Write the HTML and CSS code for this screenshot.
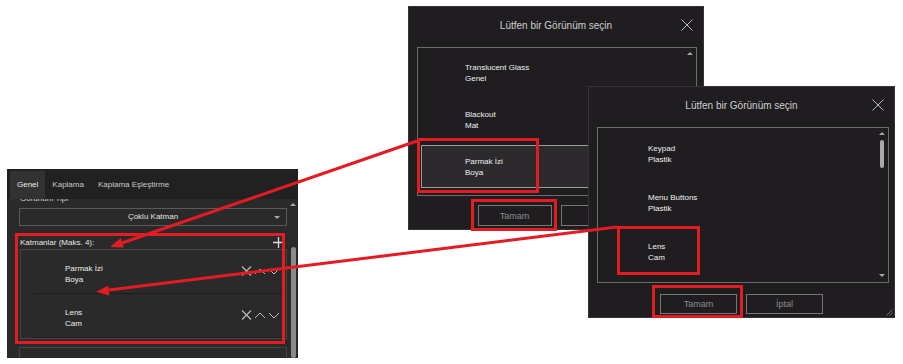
FILE: index.html
```html
<!DOCTYPE html>
<html>
    <head>
        <meta charset="utf-8">
        <title>Görünüm seçimi</title>
        <link rel="stylesheet" href="styles.css">
    </head>
    <body>
    <div class="stage">

        <!-- sol taraftaki özellik paneli -->
        <div class="panel">
            <div class="tabs">
                <span class="tab active">Genel</span>
                <span class="tab">Kaplama</span>
                <span class="tab">Kaplama Eşleştirme</span>
            </div>
            <div class="panel-body">
                <div class="panel-main">
                    <div class="field-label">Görünüm Tipi</div>
                    <div class="select">Çoklu Katman<span class="select-arrow"></span></div>
                    <div class="layers-head">
                        <span>Katmanlar (Maks. 4):</span>
                        <svg width="11" height="11" viewBox="0 0 11 11"><path d="M5.5 0V11M0 5.5H11" stroke="#dcdcdc" stroke-width="1.3"/></svg>
                    </div>
                    <div class="layers">
                        <div class="layer">
                            <div class="layer-name">Parmak İzi<br>Boya</div>
                            <div class="layer-tools">
                                <svg width="11" height="10" viewBox="0 0 11 10"><path d="M1 0.5L10 9.5M10 0.5L1 9.5" stroke="#bdbdbd" stroke-width="1.1"/></svg>
                                <svg width="12" height="8" viewBox="0 0 12 8"><path d="M1 7L6 2L11 7" stroke="#bdbdbd" stroke-width="1" fill="none"/></svg>
                                <svg width="12" height="8" viewBox="0 0 12 8"><path d="M1 2L6 7L11 2" stroke="#bdbdbd" stroke-width="1" fill="none"/></svg>
                            </div>
                        </div>
                        <div class="layer">
                            <div class="layer-name">Lens<br>Cam</div>
                            <div class="layer-tools">
                                <svg width="11" height="10" viewBox="0 0 11 10"><path d="M1 0.5L10 9.5M10 0.5L1 9.5" stroke="#bdbdbd" stroke-width="1.1"/></svg>
                                <svg width="12" height="8" viewBox="0 0 12 8"><path d="M1 7L6 2L11 7" stroke="#bdbdbd" stroke-width="1" fill="none"/></svg>
                                <svg width="12" height="8" viewBox="0 0 12 8"><path d="M1 2L6 7L11 2" stroke="#bdbdbd" stroke-width="1" fill="none"/></svg>
                            </div>
                        </div>
                    </div>
                    <div class="next-box"></div>
                </div>
                <div class="panel-scroll">
                    <span class="tri-up"></span>
                    <span class="panel-thumb"></span>
                </div>
            </div>
        </div>

        <!-- ilk pencere -->
        <div class="dialog d1">
            <div class="dialog-head">
                <span></span>
                <span class="dialog-title">Lütfen bir Görünüm seçin</span>
                <svg class="close" width="12" height="12" viewBox="0 0 12 12"><path d="M0.5 0.5L11.5 11.5M11.5 0.5L0.5 11.5" stroke="#bbb" stroke-width="1"/></svg>
            </div>
            <div class="list">
                <div class="list-items">
                    <div class="item"><span>Translucent Glass</span><span>Genel</span></div>
                    <div class="item"><span>Blackout</span><span>Mat</span></div>
                    <div class="item selected"><span>Parmak İzi</span><span>Boya</span></div>
                </div>
                <div class="list-scroll">
                    <span class="tri-up"></span>
                </div>
            </div>
            <div class="dialog-foot">
                <span class="btn">Tamam</span>
                <span class="btn">İptal</span>
            </div>
        </div>

        <!-- ikinci pencere -->
        <div class="dialog d2">
            <div class="dialog-head">
                <span></span>
                <span class="dialog-title">Lütfen bir Görünüm seçin</span>
                <svg class="close" width="12" height="12" viewBox="0 0 12 12"><path d="M0.5 0.5L11.5 11.5M11.5 0.5L0.5 11.5" stroke="#bbb" stroke-width="1"/></svg>
            </div>
            <div class="list">
                <div class="list-items">
                    <div class="item"><span>Keypad</span><span>Plastik</span></div>
                    <div class="item"><span>Menu Buttons</span><span>Plastik</span></div>
                    <div class="item"><span>Lens</span><span>Cam</span></div>
                </div>
                <div class="list-scroll">
                    <span class="tri-up"></span>
                    <span class="thumb"></span>
                    <span class="tri-down"></span>
                </div>
            </div>
            <div class="dialog-foot">
                <span class="btn">Tamam</span>
                <span class="btn">İptal</span>
            </div>
            <svg class="grip" width="8" height="8" viewBox="0 0 8 8"><path d="M7.5 1.5L1.5 7.5M7.5 4.5L4.5 7.5" stroke="#888" stroke-width="0.8"/></svg>
        </div>

        <!-- kırmızı işaretler -->
        <svg class="marks" width="903" height="364" viewBox="0 0 903 364">
            <g fill="none" stroke="#e31b23" stroke-width="3">
                <rect x="16.5" y="234.5" width="267" height="108"/>
                <rect x="418.5" y="139.5" width="119" height="52"/>
                <rect x="472.5" y="200.5" width="83" height="29"/>
                <rect x="618.5" y="227.5" width="80" height="46"/>
                <rect x="653.5" y="286.5" width="88" height="30"/>
                <line x1="417" y1="141" x2="122" y2="243"/>
                <line x1="617" y1="227" x2="109" y2="290"/>
            </g>
            <g fill="#e31b23">
                <polygon points="110,247 123.9,247.5 120.7,238.1"/>
                <polygon points="96,292 109.5,295.4 108.3,285.4"/>
            </g>
        </svg>
    </div>
    </body>
</html>
```

FILE: styles.css
```css
body{
    margin: 0;
    background-color: #fff;
    font-family: "Liberation Sans", Arial, sans-serif;
}

.stage{
    position: relative;
    width: 903px;
    height: 364px;
    overflow: hidden;
}

/* panel */
.panel{
    position: absolute;
    left: 7px;
    top: 169px;
    width: 291px;
    height: 189px;
    background-color: #2a2a2a;
    display: flex;
    flex-direction: column;
    overflow: hidden;
}

.tabs{
    height: 30px;
    flex: none;
    background-color: #212121;
    display: flex;
    align-items: flex-end;
    padding-left: 3px;
}

.tab{
    height: 28px;
    line-height: 28px;
    padding: 0 7px;
    font-size: 8px;
    color: #c9c9c9;
}

.tab.active{
    background-color: #323232;
    color: #ececec;
}

.panel-body{
    flex: 1;
    display: flex;
    overflow: hidden;
}

.panel-main{
    flex: 1;
    padding: 0 1px 0 12px;
}

.field-label{
    font-size: 8px;
    line-height: 11px;
    margin-top: -6px;
    padding-left: 1px;
    color: #d6d6d6;
}

.select{
    position: relative;
    margin-top: 4px;
    height: 18px;
    box-sizing: border-box;
    border: 1px solid #5a5a5a;
    font-size: 8px;
    line-height: 16px;
    text-align: center;
    color: #e0e0e0;
}

.select-arrow{
    position: absolute;
    right: 6px;
    top: 7px;
    border-left: 3px solid transparent;
    border-right: 3px solid transparent;
    border-top: 3px solid #a8a8a8;
}

.layers-head{
    margin-top: 10px;
    height: 13px;
    display: flex;
    justify-content: space-between;
    align-items: center;
    padding: 0 3px 0 1px;
    font-size: 8px;
    color: #e6e6e6;
}

.layers{
    margin-left: 1px;
    width: 265px;
    border: 1px solid #444;
}

.layer{
    height: 44px;
    box-sizing: border-box;
    margin-left: 12px;
    padding-top: 4px;
    border-bottom: 1px solid #1e1e1e;
    display: flex;
    align-items: center;
}

.layer-name{
    flex: 1;
    padding-left: 32px;
    font-size: 8px;
    line-height: 11px;
    color: #eee;
}

.layer-tools{
    display: flex;
    align-items: center;
    gap: 2px;
    margin-right: 6px;
    margin-bottom: 6px;
}

.next-box{
    margin-top: 8px;
    height: 30px;
    border: 1px solid #444;
    border-bottom: none;
}

.panel-scroll{
    width: 10px;
    display: flex;
    flex-direction: column;
    align-items: center;
}

.panel-scroll .tri-up{
    margin-top: 4px;
}

.panel-thumb{
    margin-top: 41px;
    width: 5px;
    height: 130px;
    border-radius: 3px;
    background-color: #8a8a8a;
}

.tri-up{
    border-left: 3px solid transparent;
    border-right: 3px solid transparent;
    border-bottom: 3px solid #a8a8a8;
}

.tri-down{
    border-left: 3px solid transparent;
    border-right: 3px solid transparent;
    border-top: 3px solid #a8a8a8;
}

/* pencereler */
.dialog{
    position: absolute;
    box-sizing: border-box;
    background-color: #1f1d20;
    border: 1px solid #363436;
    display: flex;
    flex-direction: column;
}

.d1{
    left: 408px;
    top: 6px;
    width: 296px;
    height: 224px;
}

.d2{
    left: 588px;
    top: 86px;
    width: 307px;
    height: 232px;
}

.dialog-head{
    height: 36px;
    flex: none;
    display: grid;
    grid-template-columns: 1fr auto 1fr;
    align-items: center;
    padding: 0 10px;
}

.dialog-title{
    font-size: 10px;
    color: #cfcfcf;
}

.close{
    justify-self: end;
}

.list{
    margin: 4px 6px 0 8px;
    border: 1px solid #6c6c6c;
    display: flex;
    overflow: hidden;
}

.d1 .list{
    height: 149px;
    box-sizing: border-box;
}

.d2 .list{
    height: 156px;
    box-sizing: border-box;
    margin-right: 5px;
}

.list-items{
    flex: 1;
    display: flex;
    flex-direction: column;
    gap: 4px;
    padding: 3px 0 0 3px;
}

.item{
    height: 43px;
    flex: none;
    box-sizing: border-box;
    border: 1px solid transparent;
    display: flex;
    flex-direction: column;
    justify-content: center;
    padding-left: 43px;
    font-size: 8px;
    line-height: 11px;
    color: #f0f0f0;
}

.d2 .item{
    height: 45px;
    padding-left: 46px;
}

.item.selected{
    background-color: #2c2a2d;
    border-color: #9c9c9c;
}

.list-scroll{
    width: 12px;
    display: flex;
    flex-direction: column;
    align-items: center;
}

.list-scroll .tri-up{
    margin-top: 4px;
}

.thumb{
    margin-top: 5px;
    width: 4px;
    height: 28px;
    border-radius: 2px;
    background-color: #a9a9a9;
}

.list-scroll .tri-down{
    margin-top: auto;
    margin-bottom: 5px;
}

.dialog-foot{
    display: flex;
    justify-content: center;
    gap: 9px;
    margin-top: 9px;
}

.btn{
    width: 74px;
    height: 21px;
    box-sizing: border-box;
    border: 1px solid #767676;
    display: flex;
    align-items: center;
    justify-content: center;
    font-size: 9px;
    color: #8c8c8c;
}

.d2 .dialog-foot{
    margin-top: 11px;
}

.d2 .btn{
    width: 77px;
    height: 20px;
}

.grip{
    position: absolute;
    right: 1px;
    bottom: 1px;
}

.marks{
    position: absolute;
    left: 0;
    top: 0;
    pointer-events: none;
}
```
